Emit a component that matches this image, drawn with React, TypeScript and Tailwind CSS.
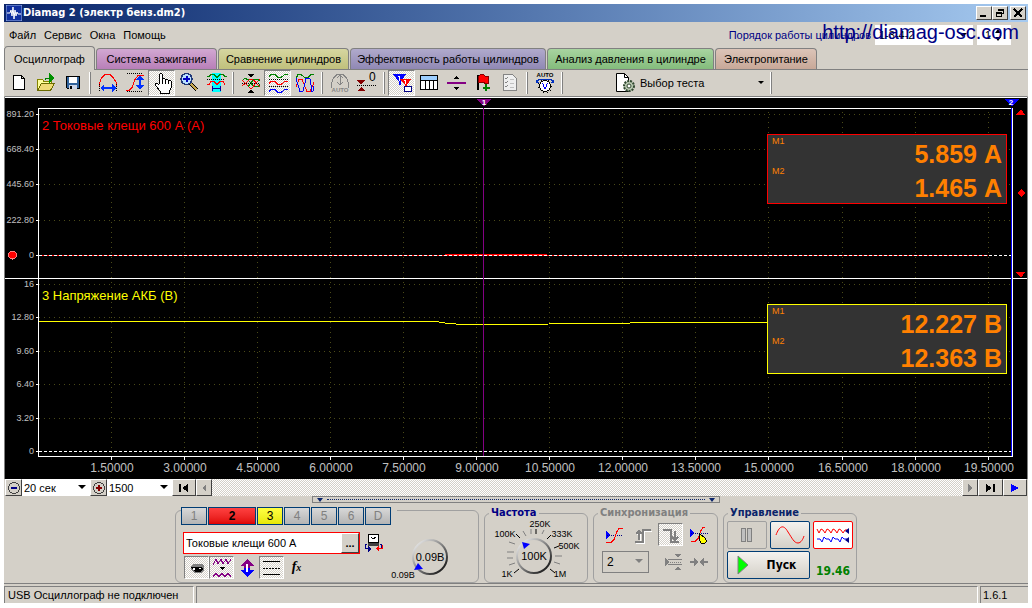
import { useState } from 'react'
import type { ReactNode } from 'react'
import clsx from 'clsx'

const DITHER =
  'bg-[repeating-conic-gradient(#ffffff_0_25%,#d4d0c8_0_50%)] bg-[length:2px_2px]'

const menus = ['Файл', 'Сервис', 'Окна', 'Помощь']

const tabs = [
  { label: 'Осциллограф', className: 'w-[91px] bg-[#d4d0c8]' },
  { label: 'Система зажигания', className: 'w-[121px] bg-linear-to-b from-[#d2a8d2] to-[#b87fb8]' },
  { label: 'Сравнение цилиндров', className: 'w-[131px] bg-linear-to-b from-[#d6d6a0] to-[#c0c07c]' },
  { label: 'Эффективность работы цилиндров', className: 'w-[196px] bg-linear-to-b from-[#b0aacc] to-[#9088b4]' },
  { label: 'Анализ давления в цилиндре', className: 'w-[167px] bg-linear-to-b from-[#a8d4a0] to-[#84bc7c]' },
  { label: 'Электропитание', className: 'w-[102px] bg-linear-to-b from-[#dcc4b8] to-[#c8a898]' },
]

const channels = [
  { label: '1', className: 'w-[26px] bg-linear-to-b from-[#d8d8d8] to-[#b4b4b4] text-[#808080]' },
  { label: '2', className: 'w-12 bg-linear-to-b from-[#ff4040] to-[#e00000] font-bold text-black' },
  { label: '3', className: 'w-[26px] bg-linear-to-b from-[#ffff40] to-[#e8e800] text-black' },
  { label: '4', className: 'w-[26px] bg-linear-to-b from-[#d8d8d8] to-[#b4b4b4] text-[#808080]' },
  { label: '5', className: 'w-[26px] bg-linear-to-b from-[#d8d8d8] to-[#b4b4b4] text-[#808080]' },
  { label: '6', className: 'w-[26px] bg-linear-to-b from-[#d8d8d8] to-[#b4b4b4] text-[#808080]' },
  { label: 'D', className: 'w-[26px] bg-linear-to-b from-[#d8d8d8] to-[#b4b4b4] text-[#808080]' },
]

const timeTicks = [
  { x: 106, label: '1.50000' },
  { x: 179, label: '3.00000' },
  { x: 252, label: '4.50000' },
  { x: 325, label: '6.00000' },
  { x: 398, label: '7.50000' },
  { x: 471, label: '9.00000' },
  { x: 544, label: '10.50000' },
  { x: 617, label: '12.00000' },
  { x: 690, label: '13.50000' },
  { x: 763, label: '15.00000' },
  { x: 837, label: '16.50000' },
  { x: 910, label: '18.00000' },
  { x: 983, label: '19.50000' },
]

const valueTicks = [
  { y: 16, label: '891.20' },
  { y: 51, label: '668.40' },
  { y: 86, label: '445.60' },
  { y: 122, label: '222.80' },
  { y: 157, label: '0' },
  { y: 186, label: '16' },
  { y: 219, label: '12.80' },
  { y: 253, label: '9.60' },
  { y: 286, label: '6.40' },
  { y: 320, label: '3.20' },
  { y: 353, label: '0' },
]

function Icon({ children, size = 24 }: { children: ReactNode; size?: number }) {
  return (
    <svg
      width={size}
      height={size}
      viewBox={`0 0 ${size} ${size}`}
      fill="none"
      stroke="currentColor"
      shapeRendering="crispEdges"
      aria-hidden="true"
    >
      {children}
    </svg>
  )
}

const toolGroups: { title: string; pressed?: boolean; icon: ReactNode }[][] = [
  [
    {
      title: 'Новый',
      icon: <path d="M6.500 4.500h8l3 3v11h-11zM14.500 4.500v3h3" fill="#fff" stroke="#000" />,
    },
    {
      title: 'Открыть',
      icon: (
        <>
          <path d="M3.500 19.500v-11h5l1 1.500h8v3" fill="#ffff9c" stroke="#848400" />
          <path d="M3.500 19.500l4-7h13l-4 7z" fill="#f0dc78" stroke="#6b6b00" />
          <path d="M15 2l6 5l-6 5z" fill="#009000" stroke="none" />
          <path d="M11.500 9v-2h4" stroke="#008000" />
        </>
      ),
    },
    {
      title: 'Сохранить',
      icon: (
        <>
          <path d="M5.500 5.500h13v12h-12l-1-1z" fill="#31639c" stroke="#000" />
          <path d="M8 6h8v6h-8z" fill="#fff" stroke="none" />
          <path d="M8 14h8v4h-8z" fill="#ced6e7" stroke="none" />
          <path d="M9 15h2v3h-2z" fill="#000" stroke="none" />
        </>
      ),
    },
  ],
  [
    {
      title: 'Развёртка',
      icon: (
        <>
          <path d="M3.500 16v-4l2-5l4-4h4l4 4l3 5v4" stroke="#f00" />
          <path d="M3.500 13v7M20.500 13v7" stroke="#000" strokeDasharray="1 1" />
          <path d="M6 16.500h12" stroke="#0030ff" strokeWidth="2" />
          <path d="M4 17l4-4v8zM20 17l-4-4v8z" fill="#0030ff" stroke="none" />
        </>
      ),
    },
    {
      title: 'Усиление',
      icon: (
        <>
          <path d="M3 19.500h3l3-3l3-8l3-4h6" stroke="#f00" />
          <path d="M4 2.500h16M4 20.500h16" stroke="#000" strokeDasharray="1 1" />
          <path d="M17 6v11" stroke="#0030ff" strokeWidth="2" />
          <path d="M17 4l-4 5h8zM17 19l-4-5h8z" fill="#0030ff" stroke="none" />
        </>
      ),
    },
    {
      title: 'Рука',
      pressed: true,
      icon: (
        <path
          d="M9.500 12.500v-9l1-1h1l1 1v5l1-1h1l1 1v1l1-1h1l1 1v1l1-1h1l1 1v6l-2 3v3h-9v-2l-5-6v-2h2l2 2M12.500 8v5M15.500 9v4M18.500 10v3"
          fill="#fff"
          stroke="#000"
        />
      ),
    },
    {
      title: 'Лупа',
      icon: (
        <>
          <path d="M13 12l7 7" stroke="#000" strokeWidth="4" />
          <path d="M14 13l6 6" stroke="#c8a850" strokeWidth="2" />
          <circle cx="9.500" cy="8" r="5.500" fill="#b8e0ff" stroke="#203878" strokeWidth="1.500" />
          <path d="M6 8h7M9.500 5v6" stroke="#0000c0" strokeWidth="2" />
        </>
      ),
    },
    {
      title: 'Фрагмент',
      icon: (
        <>
          <path d="M8 2h9v19h-9z" fill="#00ffff" stroke="none" />
          <path d="M3 5.500h2l2-2h3l3 3l3-3h3l2 2h2" stroke="#008000" />
          <path d="M3 8.500h18" stroke="#000" strokeDasharray="1 1" />
          <path d="M3 13.500h2l2-3h3l3 3l3-3h3l2 3" stroke="#f00" />
          <path d="M8 17.500h9M8.500 15v5M16.500 15v5" stroke="#00009c" />
        </>
      ),
    },
  ],
  [
    {
      title: 'Совместить',
      icon: (
        <>
          <path d="M3 9.500l3-2l3 1l3 4l3 3h4l2-2" stroke="#008000" />
          <path d="M3 15l4-3l4-4h3l3 4l4 4M3 9l4 4l4 4h2l4-5l4-4" stroke="#f00" />
          <path d="M9 16l3-4l3-4h3l3 2" stroke="#008000" />
          <path d="M3 12.500h18" stroke="#000" strokeDasharray="1 1" />
          <path d="M9 3h6l-3 4zM9 22h6l-3-4z" fill="#000" stroke="none" />
        </>
      ),
    },
    {
      title: 'Разнести',
      pressed: true,
      icon: (
        <>
          <path d="M3 5.500l2-2h4l3 3h3l4-3h3" stroke="#008000" />
          <path d="M3 12.500l2-2h4l3 3h3l4-3h3" stroke="#f00" />
          <path d="M3 20.500l2-2h4l3 3h3l4-3h3" stroke="#0000ff" />
          <path d="M3 8.500h19M3 15.500h19" stroke="#000" strokeDasharray="1 1" />
        </>
      ),
    },
    {
      title: 'Наложить',
      icon: (
        <>
          <path d="M3 7.500l2-4h3l4 3h3l3-3h3" stroke="#008000" />
          <path d="M3 15.500l3-7h3l5 12h3l4-9" stroke="#f00" />
          <path d="M3 7.500l4 13h3l3-13h4l2 13h1l1-5" stroke="#0000ff" />
        </>
      ),
    },
  ],
  [
    {
      title: 'Авто',
      icon: (
        <>
          <path d="M3.500 17v-5l2-5l4-4h5l4 4l2 5v5" stroke="#848484" />
          <path d="M12 4v10M9 7l3-3l3 3M9 11l3 3l3-3" stroke="#848484" />
          <text x="12" y="21" textAnchor="middle" fontSize="6" fontWeight="700" fill="#848484" stroke="none">
            AUTO
          </text>
        </>
      ),
    },
    {
      title: 'Ноль',
      icon: (
        <>
          <path d="M2 9h8l-4 5zM2 20h8l-4-4z" fill="#840000" stroke="none" />
          <path d="M2 14.500h19" stroke="#000" strokeDasharray="1 1" />
          <text x="14" y="10" fontSize="12" fill="#000" stroke="none">
            0
          </text>
        </>
      ),
    },
  ],
  [
    {
      title: 'Маркеры',
      pressed: true,
      icon: (
        <>
          <path d="M3 3h13l-5 8v3h-2v-3z" fill="#0000ff" stroke="none" />
          <path d="M10 8h11l-4 6v6h-2v-6z" fill="#ff0000" stroke="none" />
          <path d="M8 5.500h2M9.500 5v5M14 9.500h2M15.500 10v3" stroke="#fff" />
          <path d="M14.500 15.500h7v5h-7z" fill="#fff" stroke="#000084" />
        </>
      ),
    },
    {
      title: 'Таблица',
      icon: (
        <>
          <path d="M3.500 4.500h17v14h-17z" fill="#fff" stroke="#000" />
          <path d="M4 5h16v4h-16z" fill="#9cceff" stroke="none" />
          <path d="M3 9.500h18M8.500 9v10M12.500 9v10M16.500 9v10" stroke="#000" />
        </>
      ),
    },
    {
      title: 'Разделитель',
      icon: (
        <>
          <path d="M3 12h19" stroke="#840084" strokeWidth="2" />
          <path d="M9 8h6l-3-3zM9 16h6l-3 3z" fill="#000" stroke="none" />
        </>
      ),
    },
    {
      title: 'Флажок',
      icon: (
        <>
          <path d="M6.500 4v15" stroke="#000" strokeWidth="2" />
          <path d="M7.500 5.500l2-2h3l2 2h3v7h-3l-2-1h-5z" fill="#ff0000" stroke="#840000" />
          <path d="M15 13v7M12 16.500h7" stroke="#008000" strokeWidth="2" />
        </>
      ),
    },
    {
      title: 'Список',
      icon: (
        <>
          <path d="M5.500 3.500h9l4 4v12h-13z" fill="#efefef" stroke="#848484" />
          <path d="M7 7l1 1l2-2M7 11l1 1l2-2M7 15l1 1l2-2" stroke="#848484" />
          <path d="M12 8h4M12 12h4M12 16h4" stroke="#c0c0c0" />
        </>
      ),
    },
  ],
  [
    {
      title: 'Автонастройка',
      icon: (
        <>
          <text x="12" y="6" textAnchor="middle" fontSize="6" fontWeight="700" fill="#000" stroke="none">
            AUTO
          </text>
          <circle cx="12" cy="15" r="5.500" fill="#fff" stroke="#000" />
          <circle cx="12" cy="15" r="7" stroke="#000" strokeDasharray="1 3" />
          <path d="M9.500 12l2 5h1l2-5" stroke="#0000ff" />
          <path d="M4 10l3-2h10l3 2" stroke="#0030c0" />
          <path d="M3 8v4h3zM21 8v4h-3z" fill="#0030c0" stroke="none" />
        </>
      ),
    },
  ],
]

function Separator() {
  return (
    <div className="flex w-2 shrink-0 justify-center py-0.5">
      <span className="w-0.5 border-l border-white bg-[#808080]" />
    </div>
  )
}

function WindowButton({ title, children }: { title: string; children: ReactNode }) {
  return (
    <button
      type="button"
      title={title}
      className="flex h-3.5 w-4 items-center justify-center border border-t-white border-r-[#404040] border-b-[#404040] border-l-white bg-[#d4d0c8]"
    >
      <Icon size={10}>{children}</Icon>
    </button>
  )
}

function TitleBar() {
  return (
    <header className="flex h-[18px] items-center bg-linear-to-r from-[#0a246a] to-[#a6caf0] pr-0.5 pl-0.5">
      <svg width="16" height="16" viewBox="0 0 16 16" className="shrink-0" aria-hidden="true">
        <rect width="16" height="16" fill="#1030a0" stroke="#a0b8e8" />
        <path d="M1 8h3l1-3l1 6l1-9l1 12l1-9l1 6l1-4l1 2h3" fill="none" stroke="#fff" />
      </svg>
      <h1 className="ml-px flex-1 font-['DejaVu_Sans_Condensed','Liberation_Sans',sans-serif] text-[11px] font-bold text-white">
        Diamag 2 (электр бенз.dm2)
      </h1>
      <div className="flex">
        <WindowButton title="Свернуть">
          <path d="M1 8h6" stroke="#000" strokeWidth="2" />
        </WindowButton>
        <WindowButton title="Восстановить">
          <path d="M3.500 3v-1.500h5v4h-2M3 2h6M1.500 4.500h5v4h-5zM1 5h6" stroke="#000" />
        </WindowButton>
        <div className="w-0.5" />
        <WindowButton title="Закрыть">
          <path d="M1 1l8 8M9 1l-8 8" stroke="#000" strokeWidth="1.500" />
        </WindowButton>
      </div>
    </header>
  )
}

function MenuBar() {
  return (
    <div className="relative flex h-[26px] items-center border-x border-[#d4d0c8] pr-4 pl-1">
      <nav className="flex flex-1 gap-2">
        {menus.map((menu) => (
          <button key={menu} type="button">
            {menu}
          </button>
        ))}
      </nav>
      <label htmlFor="order" className="mr-1 text-[#000084]">
        Порядок работы цилиндров
      </label>
      <select id="order" className="h-5 w-[98px] appearance-none bg-white px-1">
        <option>1-3-4-2</option>
      </select>
      <input
        aria-label="Номер цилиндра"
        defaultValue="1"
        className="ml-1 h-5 w-[34px] bg-white px-2"
      />
      <svg width="10" height="14" viewBox="0 0 10 14" className="absolute right-6" aria-hidden="true">
        <path d="M5 1l3 4h-6zM5 13l3-4h-6z" />
      </svg>
      <svg width="8" height="5" viewBox="0 0 8 5" className="absolute right-[60px]" aria-hidden="true">
        <path d="M0 0h8l-4 4z" />
      </svg>
      <a
        href="http://diamag-osc.com"
        className="absolute top-0 right-2 text-xl leading-5 text-[#000084]"
      >
        http://diamag-osc.com
      </a>
    </div>
  )
}

function Toolbar() {
  return (
    <div className="flex h-[27px] border-x border-b border-x-[#d4d0c8] border-b-[#808080]">
      {toolGroups.map((group, index) => (
        <div key={index} className="flex">
          {group.map((tool) => (
            <button
              key={tool.title}
              type="button"
              title={tool.title}
              className={clsx(
                'flex w-[27px] items-center justify-center',
                tool.pressed &&
                  'border border-t-[#808080] border-r-white border-b-white border-l-[#808080]',
                tool.pressed && DITHER,
              )}
            >
              <Icon>{tool.icon}</Icon>
            </button>
          ))}
          <Separator />
        </div>
      ))}
      <button type="button" className="ml-12 flex w-[153px] items-center gap-1">
        <svg width="22" height="22" viewBox="0 0 22 22" fill="none" aria-hidden="true">
          <path d="M2.500 1.500h8l4 4v14h-12z" fill="#fff" stroke="#000" />
          <path d="M10.500 1.500v4h4" stroke="#000" />
          <circle cx="15" cy="14" r="5" fill="#b8c8b0" stroke="#304830" strokeWidth="2" strokeDasharray="2 1" />
          <circle cx="15" cy="14" r="2" fill="#fff" stroke="#304830" />
        </svg>
        <span className="flex-1 text-left">Выбор теста</span>
        <svg width="10" height="6" viewBox="0 0 10 6" aria-hidden="true">
          <path d="M1 1h6l-3 3z" />
        </svg>
      </button>
      <Separator />
    </div>
  )
}

function Readout({ className, values }: { className: string; values: string[] }) {
  return (
    <div
      className={clsx(
        'absolute right-5 flex h-[70px] w-[240px] justify-between border bg-[#333] px-1 text-[#ff8000]',
        className,
      )}
    >
      <div className="text-[9px] leading-3">
        <p className="h-[30px]">M1</p>
        <p>M2</p>
      </div>
      <div className="pt-0.5 text-right text-[25px] leading-[34px] font-bold">
        {values.map((value) => (
          <p key={value}>{value}</p>
        ))}
      </div>
    </div>
  )
}

function Oscillogram() {
  return (
    <div className="relative border-t border-white bg-black">
      <svg
        viewBox="0 0 1022 381"
        className="block w-full"
        fill="none"
        shapeRendering="crispEdges"
        role="img"
        aria-label="Осциллограмма"
      >
        <g stroke="#4a4a18" strokeDasharray="1 4">
          {timeTicks.map((tick) => (
            <path key={tick.label} d={`M${tick.x + 0.5} 14V357`} />
          ))}
          {valueTicks.map((tick) => (
            <path key={tick.y} d={`M34 ${tick.y + 0.5}H1006`} />
          ))}
        </g>

        <path d="M34 157.500H983" stroke="#f00" />
        <path d="M34 353.500H1006" stroke="#000" />
        <path d="M34 157.500H1006M34 353.500H1006" stroke="#fff" strokeDasharray="3 2" />
        <path d="M440 156.500H542" stroke="#f00" />
        <path
          d="M34 223.500H434M434 224.500H440M440 225.500H451M451 226.500H543M544 225.500H625M625 224.500H763"
          stroke="#ff0"
        />

        <path d="M33.500 359V10.500H1007.500V358.500H33M0 180.500H1022" stroke="#fff" />
        <path d="M1006.500 10V358" stroke="#00f" />
        <path d="M478.500 10V358" stroke="#840084" />
        <path d="M471 1h15l-7 8z" fill="#840084" />
        <path d="M999 1h15l-7 8z" fill="#00f" />
        <path d="M1011 17h9l-4-6zM1011 174h9l-4 6zM1016 91l4 4l-4 4l-4-4z" fill="#f00" />
        <circle cx="7.500" cy="157" r="4" fill="#f00" stroke="#ff8080" />

        <g stroke="#fff">
          {timeTicks.map((tick) => (
            <path key={tick.label} d={`M${tick.x + 0.5} 359v3`} />
          ))}
          {valueTicks.map((tick) => (
            <path key={tick.y} d={`M31 ${tick.y + 0.5}h3`} />
          ))}
        </g>
        <g fill="#c0c0c0" fontSize="12" textAnchor="middle">
          {timeTicks.map((tick) => (
            <text key={tick.label} x={tick.x + 1} y="374">
              {tick.label}
            </text>
          ))}
        </g>
        <g fill="#c0c0c0" fontSize="9" textAnchor="end">
          {valueTicks.map((tick) => (
            <text key={tick.y} x="29" y={tick.y + 3}>
              {tick.label}
            </text>
          ))}
        </g>
        <g fill="#fff" fontSize="8" fontWeight="700" textAnchor="middle">
          <text x="479" y="7">1</text>
          <text x="1006" y="7">2</text>
        </g>
        <g fontSize="13">
          <text x="37" y="32" fill="#f00">
            2 Токовые клещи 600 А (А)
          </text>
          <text x="37" y="202" fill="#ff0">
            3 Напряжение АКБ (В)
          </text>
        </g>
      </svg>
      <Readout className="top-9 border-[#f00]" values={['5.859 А', '1.465 А']} />
      <Readout className="top-[206px] border-[#ff0]" values={['12.227 В', '12.363 В']} />
    </div>
  )
}

function ScrollButton({
  title,
  className,
  children,
}: {
  title: string
  className: string
  children: ReactNode
}) {
  return (
    <button
      type="button"
      title={title}
      className={clsx(
        'flex shrink-0 items-center justify-center border border-t-white border-r-[#404040] border-b-[#404040] border-l-white bg-[#d4d0c8]',
        className,
      )}
    >
      <Icon size={14}>{children}</Icon>
    </button>
  )
}

function Dropdown({ label, value, className }: { label: string; value: string; className: string }) {
  return (
    <div className={clsx('relative flex items-center bg-white', className)}>
      <select aria-label={label} className="h-full w-full appearance-none px-0.5 outline-none">
        <option>{value}</option>
      </select>
      <svg width="8" height="5" viewBox="0 0 8 5" className="absolute right-1" aria-hidden="true">
        <path d="M0 0h8l-4 4z" />
      </svg>
    </div>
  )
}

function ScrollRow() {
  return (
    <div className="flex h-[17px] border-x border-[#d4d0c8]">
      <ScrollButton title="Уменьшить" className="w-[17px]">
        <circle cx="7" cy="7" r="5.500" stroke="#404040" />
        <path d="M4 7h6" stroke="#000084" strokeWidth="2" />
      </ScrollButton>
      <Dropdown label="Длительность" value="20 сек" className="w-[68px]" />
      <ScrollButton title="Увеличить" className="w-[17px]">
        <circle cx="7" cy="7" r="5.500" stroke="#404040" />
        <path d="M4 7h6M7 4v6" stroke="#840000" strokeWidth="2" />
      </ScrollButton>
      <Dropdown label="Точек" value="1500" className="w-[65px]" />
      <ScrollButton title="В начало" className="w-6">
        <path d="M2 3h2v8h-2zM11 3v8l-6-4z" fill="#000" stroke="none" />
      </ScrollButton>
      <ScrollButton title="Назад" className="w-4">
        <path d="M9 3v8l-4-4z" fill="#808080" stroke="none" />
      </ScrollButton>
      <div className={clsx('flex-1', DITHER)} />
      <ScrollButton title="Вперёд" className="w-4">
        <path d="M5 3v8l4-4z" fill="#808080" stroke="none" />
      </ScrollButton>
      <ScrollButton title="В конец" className="w-[25px]">
        <path d="M2 3v8l6-4zM9 3h2v8h-2z" fill="#000" stroke="none" />
      </ScrollButton>
      <ScrollButton title="Пуск прокрутки" className="w-6">
        <path d="M3 3v8l8-4z" fill="#00f" stroke="none" />
      </ScrollButton>
    </div>
  )
}

function Splitter() {
  return (
    <div className="flex h-2 justify-center">
      <div className="flex h-[7px] w-[408px] items-center justify-between border border-[#808080] px-1">
        <svg width="6" height="4" viewBox="0 0 6 4" aria-hidden="true">
          <path d="M0 0h6l-3 4z" fill="#0a246a" />
        </svg>
        <span className="mx-1 flex-1 border-t border-dotted border-[#0a246a]" />
        <svg width="6" height="4" viewBox="0 0 6 4" aria-hidden="true">
          <path d="M0 0h6l-3 4z" fill="#0a246a" />
        </svg>
      </div>
    </div>
  )
}

function SmallTool({
  title,
  pressed,
  children,
}: {
  title: string
  pressed?: boolean
  children: ReactNode
}) {
  return (
    <button
      type="button"
      title={title}
      className={clsx(
        'flex h-[23px] w-[25px] items-center justify-center',
        pressed && 'border border-t-[#808080] border-r-white border-b-white border-l-[#808080]',
        pressed && DITHER,
      )}
    >
      <Icon size={20}>{children}</Icon>
    </button>
  )
}

function Knob({ x, y }: { x: number; y: number }) {
  return (
    <>
      <defs>
        <linearGradient id="knob" x1="0" y1="0" x2="1" y2="1">
          <stop offset="0" stopColor="#fff" />
          <stop offset="0.500" stopColor="#808080" />
          <stop offset="1" stopColor="#000" />
        </linearGradient>
      </defs>
      <circle cx={x} cy={y} r="17" fill="#d4d0c8" stroke="url(#knob)" strokeWidth="2" />
    </>
  )
}

function ChannelPanel() {
  const [active, setActive] = useState('2')

  return (
    <section className="flex h-[73px] w-[304px] rounded-md border border-[#a0a0a0]">
      <div className="-mt-1 w-[214px] pl-[5px]">
        <div className="flex w-max gap-px bg-[#d4d0c8] pr-1.5">
          {channels.map((channel) => (
            <button
              key={channel.label}
              type="button"
              aria-pressed={active === channel.label}
              onClick={() => setActive(channel.label)}
              className={clsx(
                'h-[18px] border border-[#003c74] text-xs leading-4',
                channel.className,
              )}
            >
              {channel.label}
            </button>
          ))}
        </div>
        <div className="mt-[7px] ml-0.5 flex items-center gap-1">
          <div className="flex h-[22px] w-[177px] border border-[#f00] bg-white">
            <input
              aria-label="Датчик"
              defaultValue="Токовые клещи 600 А"
              className="min-w-0 flex-1 px-0.5 outline-none"
            />
            <button
              type="button"
              className="w-[18px] border border-t-white border-r-[#404040] border-b-[#404040] border-l-white bg-[#d4d0c8] leading-3 font-bold"
            >
              ...
            </button>
          </div>
          <button type="button" title="Инвертировать">
            <Icon size={20}>
              <path d="M4.500 1.500h10v8h-10z" fill="#fff" stroke="#000" />
              <path d="M4 10h11v3h-11z" fill="#404040" stroke="none" />
              <path d="M7 4l2 2l3-2" stroke="#000" />
              <path d="M3 11.500h-1l-1 2v1l1 1h2M16 11.500h1l1 2v1l-1 1h-2" stroke="#000084" />
              <path d="M4 12v7l3-3z" fill="#000084" stroke="none" />
              <path d="M15 12v7l-3-3zM15 15h3v-3h1v4h-4z" fill="#f00" stroke="none" />
            </Icon>
          </button>
        </div>
        <div className="mt-0.5 ml-[3px] flex">
          <SmallTool title="Показать канал" pressed>
            <path d="M4 8l3-2h8l2 2v4l-3 3h-6l-4-3z" fill="#808080" stroke="none" />
            <path d="M4 9h10l2 2l-3 3h-5z" fill="#000" stroke="none" />
            <path d="M6 10h2v2h-2zM12 10h2v1h-2z" fill="#fff" stroke="none" />
          </SmallTool>
          <SmallTool title="Сглаживание" pressed>
            <path d="M1 6.500l3-5l2 4l3-4l2 4l3-4l2 4l3-4M1 18.500l3-3l3 3l3-3l3 3l3-3l3 3" stroke="#840084" />
            <path d="M7 9h6l-3 3z" fill="#000" stroke="none" />
          </SmallTool>
          <SmallTool title="Смещение">
            <path d="M3 8l7-7l7 7h-4v2h-6v-2z" fill="#840084" stroke="none" />
            <path d="M3 12l7 7l7-7h-4v-2h-6v2z" fill="#0000ff" stroke="none" />
            <path d="M10 6v8" stroke="#fff" strokeWidth="2" />
          </SmallTool>
          <SmallTool title="Уровни" pressed>
            <path d="M1 3.500h17M1 16.500h17" stroke="#000" />
            <path d="M1 10.500h17" stroke="#000" strokeDasharray="2 1" />
          </SmallTool>
          <button
            type="button"
            title="Функция"
            className="w-[25px] font-['Liberation_Serif',serif] text-sm leading-5 font-bold italic"
          >
            f<span className="text-[10px]">x</span>
          </button>
        </div>
      </div>
      <svg width="88" height="71" viewBox="0 0 88 71" role="img" aria-label="Чувствительность">
        <Knob x={40} y={46} />
        <path d="M24 59l4-7l5 6z" fill="#00f" />
        <g fontSize="11" textAnchor="middle">
          <text x="40" y="50">0.09В</text>
          <text x="13" y="67" fontSize="9">0.09В</text>
        </g>
      </svg>
    </section>
  )
}

function Group({
  title,
  titleClass,
  className,
  children,
}: {
  title: string
  titleClass: string
  className: string
  children: ReactNode
}) {
  return (
    <fieldset className={clsx('h-[77px] rounded-md border border-[#a0a0a0]', className)}>
      <legend
        className={clsx(
          "ml-1 px-0.5 font-['DejaVu_Sans_Condensed','Liberation_Sans',sans-serif] text-[11px] leading-[14px] font-bold",
          titleClass,
        )}
      >
        {title}
      </legend>
      {children}
    </fieldset>
  )
}

const dialLabels = [
  { x: 20, y: 17, label: '100K' },
  { x: 55, y: 7, label: '250K' },
  { x: 77, y: 17, label: '333K' },
  { x: 84, y: 29, label: '500K' },
  { x: 75, y: 57, label: '1M' },
  { x: 22, y: 57, label: '1K' },
]

function FrequencyPanel() {
  return (
    <Group title="Частота" titleClass="text-[#000084]" className="w-[104px]">
      <svg width="102" height="61" viewBox="0 0 102 61" role="img" aria-label="Частота">
        <path d="M35 18l-4-4M65 49l5 4M34 49l-5 4M62 19l4-4M69 28l5-2M51 14v-5" stroke="#000" />
        <path
          d="M30 24l-6-2M29 32h-7M28 38h-6M30 43l-6 2M41 16l-3-5M46 14v-5M57 14l2-4M70 36h7M69 42l6 2"
          stroke="#808080"
        />
        <Knob x={49} y={36} />
        <path d="M37 22l8 2l-6 5z" fill="#00f" />
        <g fontSize="9" textAnchor="middle">
          {dialLabels.map((item) => (
            <text key={item.label} x={item.x} y={item.y}>
              {item.label}
            </text>
          ))}
          <text x="49" y="40" fontSize="11">100K</text>
        </g>
      </svg>
    </Group>
  )
}

function SyncPanel() {
  return (
    <Group title="Синхронизация" titleClass="text-[#808080]" className="w-[125px]">
      <div className="flex flex-col gap-1 pt-[3px] pr-1.5 pl-2">
        <div className="flex justify-between">
          <SmallTool title="Уровень">
            <path d="M1 6v8l5-4z" fill="#00f" stroke="none" />
            <path d="M2 10.500h16" stroke="#000084" strokeDasharray="1 1" />
            <path d="M1 17.500h5l3-3l3-8l2-3h4" stroke="#f00" />
          </SmallTool>
          <SmallTool title="Фронт">
            <path d="M3 18h8v-12h8M7 16v-8M4 10l3-3l3 3" stroke="#fff" />
            <path d="M2 17h8v-12h8M6 15v-8M3 9l3-3l3 3" stroke="#808080" strokeWidth="2" />
          </SmallTool>
          <SmallTool title="Спад" pressed>
            <path d="M2 5h8v12h8M14 6v8M11 12l3 3l3-3" stroke="#808080" strokeWidth="2" />
          </SmallTool>
          <SmallTool title="Указать">
            <path d="M1 4v8l5-4z" fill="#00f" stroke="none" />
            <path d="M2 8.500h17" stroke="#000084" strokeDasharray="1 1" />
            <path d="M2 16.500h4l3-3l3-8l2-3h2" stroke="#f00" />
            <path d="M10.500 8.500l6 5l1 3l-2 2h-3l-2-3z" fill="#ff0" stroke="#000" />
          </SmallTool>
        </div>
        <div className="flex items-center justify-between">
          <div className="relative flex items-center">
            <select
              aria-label="Канал синхронизации"
              className="h-[22px] w-[47px] appearance-none border border-[#808080] px-1 text-xs leading-4"
            >
              <option>2</option>
            </select>
            <svg width="8" height="5" viewBox="0 0 8 5" className="absolute right-1.5" aria-hidden="true">
              <path d="M0 0h8l-4 4z" fill="#808080" />
            </svg>
          </div>
          <div className="flex">
            <SmallTool title="По уровню">
              <path d="M1 6v8l4-4zM10 2h7l-3 4zM10 18h7l-3-4z" fill="#808080" stroke="none" />
              <path d="M4 7.500h14M4 12.500h14" stroke="#808080" />
              <path d="M4 10.500h14" stroke="#808080" strokeDasharray="1 1" />
            </SmallTool>
            <SmallTool title="По центру">
              <path d="M1 9h4v-3l5 4l-5 4v-3h-4zM19 9h-4v-3l-5 4l5 4v-3h4z" fill="#808080" stroke="none" />
            </SmallTool>
          </div>
        </div>
      </div>
    </Group>
  )
}

function ControlPanel() {
  return (
    <Group title="Управление" titleClass="text-[#0a246a]" className="w-[134px]">
      <div className="grid grid-cols-3 gap-x-[3px] gap-y-0.5 px-[3px] pt-px">
        <button
          type="button"
          title="Пауза"
          className="flex h-7 items-center justify-center rounded-xs border border-[#a0a0a0]"
        >
          <Icon size={20}>
            <path d="M4.500 3.500h4v13h-4zM10.500 3.500h4v13h-4z" fill="#c0c0c0" stroke="#808080" />
          </Icon>
        </button>
        <button
          type="button"
          title="Осциллограмма"
          className="flex h-7 items-center justify-center rounded-xs border border-[#003c74] bg-linear-to-b from-[#f4f2ee] to-[#d4d0c8]"
        >
          <svg width="30" height="20" viewBox="0 0 30 20" fill="none" aria-hidden="true">
            <path d="M1 10c3-8 7-12 12-3c4 6 6 11 10 11c3 0 5-4 6-7" stroke="#f00" />
          </svg>
        </button>
        <button
          type="button"
          title="Самописец"
          className="flex h-7 items-center justify-center rounded-xs border border-[#f00] bg-white"
        >
          <svg width="34" height="20" viewBox="0 0 34 20" fill="none" aria-hidden="true">
            <path d="M1 4l2 4l2-4l2 1l2 3l2-4l2 1l2 3l2-4l2 1l2 3l2-4l2 1l2 3l2-3h2" stroke="#f00" />
            <path d="M1 14h3l2 3l2-5l2 2h3l2 3l2-5l2 2h3l2 3l2-5l2 2h3" stroke="#00f" />
            <path d="M33 3v6l-4-3zM33 12v6l-4-3z" fill="#000084" />
          </svg>
        </button>
        <button
          type="button"
          className="col-span-2 flex h-7 items-center rounded-xs border border-[#003c74] bg-linear-to-b from-[#f4f2ee] to-[#d4d0c8] font-['DejaVu_Sans_Condensed','Liberation_Sans',sans-serif] text-xs font-bold"
        >
          <svg width="30" height="20" viewBox="0 0 30 20" aria-hidden="true">
            <path d="M10 1v18l10-9z" fill="#0f0" stroke="#808080" />
          </svg>
          <span className="flex-1 pr-1">Пуск</span>
        </button>
        <output className="self-end text-center font-['DejaVu_Sans_Condensed','Liberation_Sans',sans-serif] text-xs font-bold text-[#008000]">
          19.46
        </output>
      </div>
    </Group>
  )
}

export default function App() {
  const [tab, setTab] = useState(tabs[0].label)

  return (
    <div className="min-h-screen bg-white p-1 font-['Liberation_Sans',sans-serif] text-[11px] leading-4 text-black">
      <main className="flex flex-col bg-[#d4d0c8]">
        <TitleBar />
        <MenuBar />
        <div role="tablist" className="flex h-[22px] items-end gap-px border-b border-[#808080]">
          {tabs.map((item) => (
            <button
              key={item.label}
              type="button"
              role="tab"
              aria-selected={tab === item.label}
              onClick={() => setTab(item.label)}
              className={clsx(
                'shrink-0 rounded-t-sm border border-b-0 border-[#808080] text-center whitespace-nowrap',
                tab === item.label ? '-mb-px h-6' : 'h-[21px]',
                item.className,
              )}
            >
              {item.label}
            </button>
          ))}
        </div>
        <Toolbar />
        <div className="border-x border-[#808080]">
          <Oscillogram />
        </div>
        <ScrollRow />
        <Splitter />
        <div className="flex h-20 items-end gap-[5px] border-b border-[#808080] pl-[171px]">
          <ChannelPanel />
          <FrequencyPanel />
          <SyncPanel />
          <ControlPanel />
        </div>
        <footer className="mt-0.5 flex h-[17px] gap-0.5">
          <div className="w-[190px] border-t border-r border-l border-t-[#808080] border-r-white border-l-[#808080] pl-[3px]">
            USB Осциллограф не подключен
          </div>
          <div className="flex-1 border-t border-r border-l border-t-[#808080] border-r-white border-l-[#808080]" />
          <div className="w-12 border-t border-l border-[#808080] pl-0.5">1.6.1</div>
        </footer>
      </main>
    </div>
  )
}
